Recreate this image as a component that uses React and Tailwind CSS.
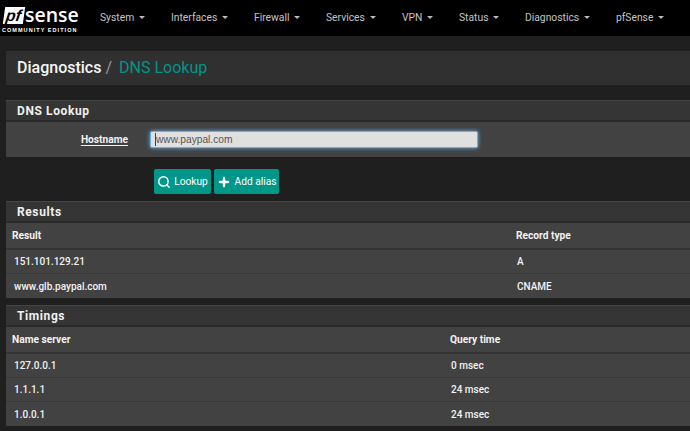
import { Search, Plus } from 'lucide-react';

const navItems = [
  { name: "System", width: "w-[71px]" },
  { name: "Interfaces", width: "w-[83px]" },
  { name: "Firewall", width: "w-[72px]" },
  { name: "Services", width: "w-[76px]" },
  { name: "VPN", width: "w-[57px]" },
  { name: "Status", width: "w-[66px]" },
  { name: "Diagnostics", width: "w-[91px]" },
  { name: "pfSense", width: "w-[60px]" },
];

function Caret() {
  return <span className="ml-[5px] w-0 h-0 border-x-[3.5px] border-x-transparent border-t-[3.5px] border-t-[#bdbdbd]" />;
}

function PanelHeading({ title }) {
  return (
    <div className="h-[22px] pl-[11px] pt-[1px] flex items-center bg-[#353535] border-t border-[#454545] border-b-2 border-b-[#292929] text-[12px] font-bold tracking-[0.6px] text-[#f0f0f0]">
      {title}
    </div>
  );
}

function ResultTable({ col1, col2, col2Width, rows }) {
  return (
    <div className="bg-[#424242] text-[10.2px] text-[#f2f2f2] font-medium">
      <div className="h-[27px] pl-[6px] flex items-center font-bold border-b-2 border-[#333333]">
        <div className="flex-1">{col1}</div>
        <div className={col2Width}>{col2}</div>
      </div>
      {rows.map((row, i) => (
        <div key={row[0]} className={"h-[24px] pl-[8px] flex items-center text-[10px] " + (i < rows.length - 1 ? "border-b border-[#383838]" : "")}>
          <div className="flex-1">{row[0]}</div>
          <div className={col2Width}>
            <span className="pl-[1px]">{row[1]}</span>
          </div>
        </div>
      ))}
    </div>
  );
}

function App() {
  return (
    <div className="w-[690px] h-[431px] overflow-hidden bg-[#1f1f1f] font-['Roboto',_sans-serif]">
      <header className="h-[36px] bg-black flex items-center">
        <div className="w-[100px] pl-[2px] pt-[3px] shrink-0">
          <div className="flex items-center h-[20px] pl-[2px]">
            <span className="bg-white text-black italic font-black text-[16px] leading-[17px] h-[17px] w-[20px] pl-[2px] skew-x-[-8deg] font-['Liberation_Sans',_sans-serif]">pf</span>
            <span className="text-white font-semibold text-[19.5px] leading-none ml-[1px] font-['Open_Sans',_sans-serif]">sense</span>
          </div>
          <div className="text-[5.5px] leading-[7px] mt-[2px] font-bold tracking-[1.05px] text-white whitespace-nowrap font-['Liberation_Sans',_sans-serif]">COMMUNITY EDITION</div>
        </div>
        <nav className="flex items-center text-[10.3px] text-[#c4c4c4] pb-[1px]">
          {navItems.map((item) => (
            <div key={item.name} className={"flex items-center whitespace-nowrap " + item.width}>
              {item.name}
              <Caret />
            </div>
          ))}
        </nav>
      </header>

      <div className="pl-[6px] pt-[15px]">
        <div className="h-[34px] bg-[#303030] pl-[11px] flex items-center text-[16px]">
          <span className="text-[#f5f5f5] font-medium">Diagnostics</span>
          <span className="text-[#9a9a9a] ml-[4px]">/</span>
          <span className="text-[#009688] ml-[7px]">DNS Lookup</span>
        </div>

        <section className="mt-[15px]">
          <PanelHeading title="DNS Lookup" />
          <div className="h-[35px] bg-[#424242] flex items-center">
            <div className="w-[122px] text-right text-[10.2px] font-bold text-[#f0f0f0] underline underline-offset-2">Hostname</div>
            <div className="relative ml-[22px]">
              <input
                readOnly
                value="www.paypal.com"
                className="block w-[328px] h-[17px] rounded-[2px] bg-[#e0e0e0] pl-[5px] text-[10.2px] text-[#555555] border border-[#66afe9] shadow-[0_0_4px_#66afe9] outline-none font-['Liberation_Sans',_sans-serif]"
              />
              <span className="absolute left-[5px] top-[2px] w-px h-[13px] bg-[#444444]" />
            </div>
          </div>
        </section>

        <div className="flex gap-[3px] pl-[148px] mt-[12px] h-[25px]">
          <button className="h-[25px] w-[57px] flex items-center justify-center gap-[3px] rounded-[2px] bg-[#009688] text-white text-[10.2px]">
            <Search size={14} strokeWidth={2.5} />
            Lookup
          </button>
          <button className="h-[25px] w-[65px] flex items-center justify-center gap-[4px] rounded-[2px] bg-[#009688] text-white text-[10.2px]">
            <Plus size={14} strokeWidth={4} />
            Add alias
          </button>
        </div>

        <section className="mt-[7px]">
          <PanelHeading title="Results" />
          <ResultTable
            col1="Result"
            col2="Record type"
            col2Width="w-[174px]"
            rows={[["151.101.129.21", "A"], ["www.glb.paypal.com", "CNAME"]]}
          />
        </section>

        <section className="mt-[7px]">
          <PanelHeading title="Timings" />
          <ResultTable
            col1="Name server"
            col2="Query time"
            col2Width="w-[240px]"
            rows={[["127.0.0.1", "0 msec"], ["1.1.1.1", "24 msec"], ["1.0.0.1", "24 msec"]]}
          />
        </section>
      </div>
    </div>
  );
}

export default App;
